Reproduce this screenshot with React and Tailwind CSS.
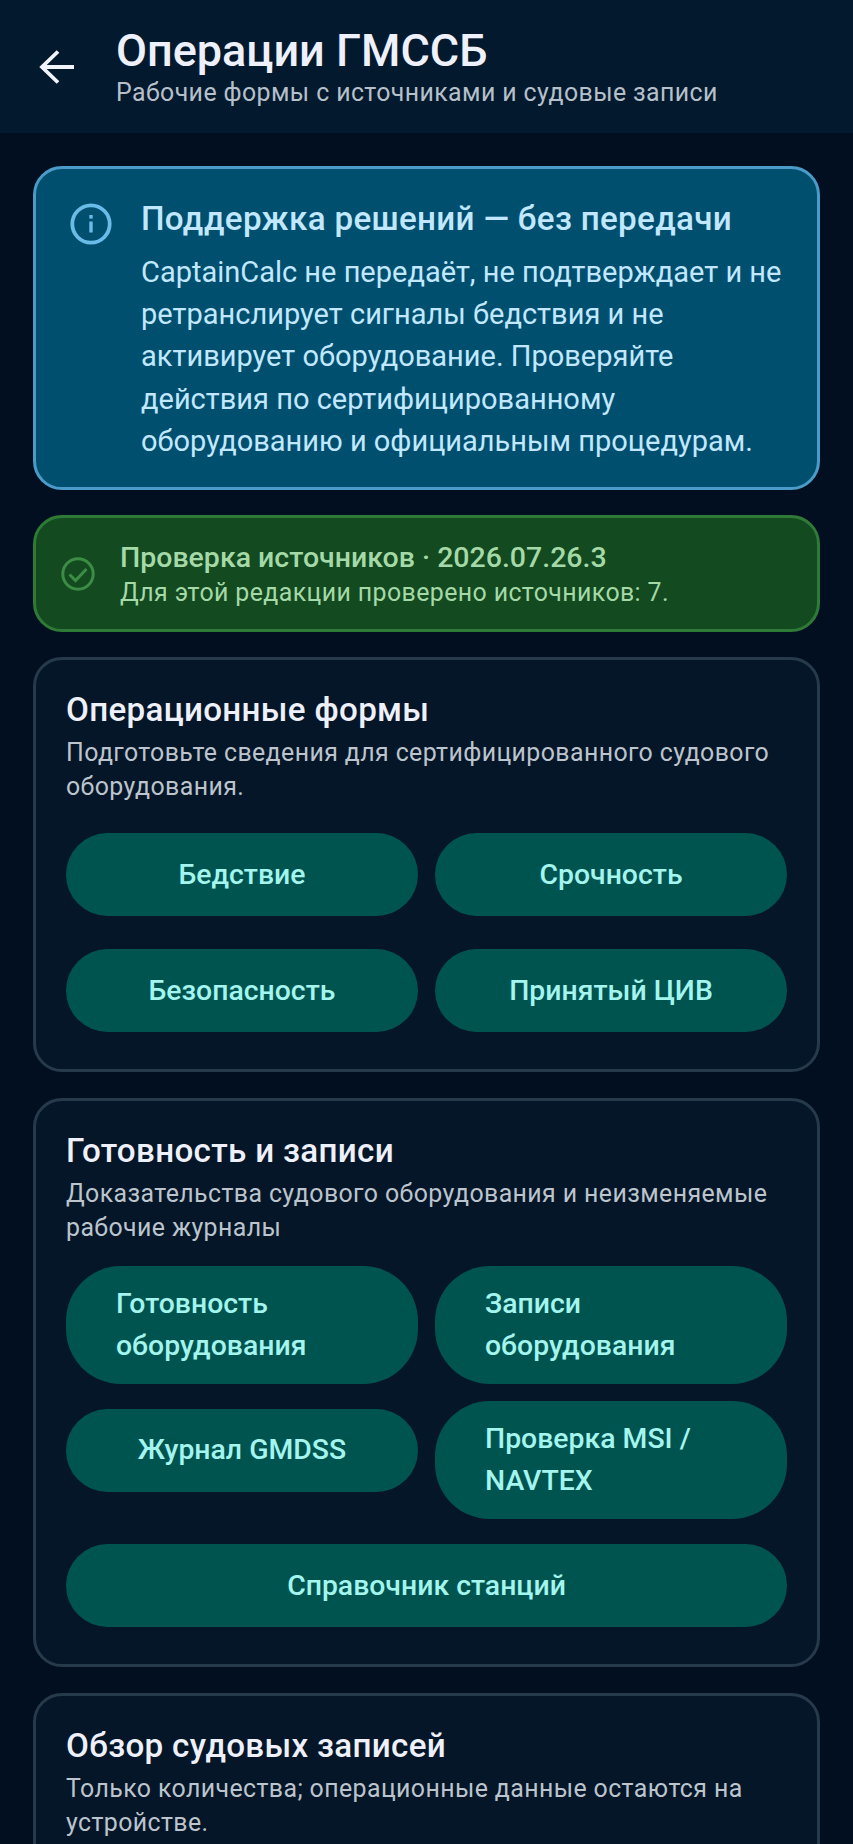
const FormButton = ({ children, left, className = '' }) => (
  <button className={`flex items-center rounded-[55px] bg-[#005450] text-[#a4f5ee] text-[28.4px] leading-[42px] font-medium min-h-[83px] ${left ? 'justify-start text-left pl-[50px] pr-[50px] py-[17px]' : 'justify-center text-center px-[20px]'} ${className}`}>
    {children}
  </button>
);

const Section = ({ title, subtitle, className = '', children }) => (
  <section className={`rounded-[29px] border-[3px] border-[#263a4b] bg-[#041628] px-[30px] ${className}`}>
    <h2 className="text-[33.2px] leading-[44px] tracking-[0.31px] font-medium text-[#eef1fb] mt-[28px]">{title}</h2>
    <p className="text-[24.9px] leading-[33.5px] tracking-[0.4px] text-[#bcc4cd] mt-[4px]">{subtitle}</p>
    {children}
  </section>
);

export default function App() {
  return (
    <div className="h-[1844px] w-[853px] overflow-hidden bg-[#020f20] font-['Roboto',sans-serif]">
      <header className="flex h-[133px] items-start bg-[#03192e]">
        <div className="mt-[48px] ml-[38px] w-[78px] shrink-0">
          <svg width="38" height="38" viewBox="0 0 38 38" fill="none" stroke="#f2f4fb" strokeWidth="3.8">
            <path d="M36 19H5M20 3.5 4 19l16 15.5" />
          </svg>
        </div>
        <div>
          <h1 className="text-[45px] leading-[52px] font-medium text-[#eef1fb] mt-[25px] whitespace-nowrap">Операции ГМССБ</h1>
          <p className="text-[24.9px] leading-[32px] tracking-[0.4px] text-[#b6c0cb] whitespace-nowrap">Рабочие формы с источниками и судовые записи</p>
        </div>
      </header>

      <main className="flex flex-col px-[33px] pt-[33px]">
        <section className="flex h-[324px] rounded-[29px] border-[3px] border-[#4a9bc8] bg-[#004f6f] pl-[34px]">
          <svg className="mt-[34px] shrink-0" width="42" height="42" viewBox="0 0 42 42" fill="none" stroke="#69bbe8">
            <circle cx="21" cy="21" r="18.7" strokeWidth="3.8" />
            <path d="M21 18.5v11" strokeWidth="3.4" />
            <path d="M21 12v3.6" strokeWidth="3.4" />
          </svg>
          <div className="ml-[29px] w-[650px] shrink-0">
            <h2 className="text-[33.2px] leading-[44px] tracking-[0.31px] font-medium text-[#c2e8ff] mt-[28px] whitespace-nowrap">Поддержка решений — без передачи</h2>
            <p className="text-[29px] leading-[42.2px] text-[#c2e8ff] mt-[10px]">
              CaptainCalc не передаёт, не подтверждает и не ретранслирует сигналы бедствия и не активирует оборудование. Проверяйте действия по сертифицированному оборудованию и официальным процедурам.
            </p>
          </div>
        </section>

        <section className="mt-[25px] flex h-[117px] items-center rounded-[29px] border-[3px] border-[#2e7a37] bg-[#134a20] pl-[25px]">
          <svg className="shrink-0" width="34" height="34" viewBox="0 0 34 34" fill="none" stroke="#3d8c46" strokeWidth="3">
            <circle cx="17" cy="17" r="15.2" />
            <path d="m8.5 17.5 6 6L25.5 12" />
          </svg>
          <div className="ml-[25px]">
            <div className="text-[28.5px] leading-[36px] font-medium text-[#a5d9a8]">Проверка источников · 2026.07.26.3</div>
            <div className="text-[24.9px] leading-[30px] tracking-[0.4px] text-[#a5d9a8] mt-[2px]">Для этой редакции проверено источников: 7.</div>
          </div>
        </section>

        <Section
          className="mt-[25px] h-[415px]"
          title="Операционные формы"
          subtitle="Подготовьте сведения для сертифицированного судового оборудования."
        >
          <div className="mt-[30px] grid grid-cols-2 gap-x-[17px] gap-y-[33px]">
            <FormButton>Бедствие</FormButton>
            <FormButton>Срочность</FormButton>
            <FormButton>Безопасность</FormButton>
            <FormButton>Принятый ЦИВ</FormButton>
          </div>
        </Section>

        <Section
          className="mt-[26px] h-[569px]"
          title="Готовность и записи"
          subtitle="Доказательства судового оборудования и неизменяемые рабочие журналы"
        >
          <div className="mt-[22px] grid grid-cols-2 items-center gap-x-[17px]">
            <FormButton left>Готовность оборудования</FormButton>
            <FormButton left>Записи оборудования</FormButton>
            <FormButton className="mt-[17px] mb-[20px]">Журнал GMDSS</FormButton>
            <FormButton left className="mt-[17px]">Проверка MSI / NAVTEX</FormButton>
            <FormButton className="col-span-2 mt-[25px]">Справочник станций</FormButton>
          </div>
        </Section>

        <Section
          className="mt-[26px] h-[300px]"
          title="Обзор судовых записей"
          subtitle="Только количества; операционные данные остаются на устройстве."
        />
      </main>
    </div>
  );
}
